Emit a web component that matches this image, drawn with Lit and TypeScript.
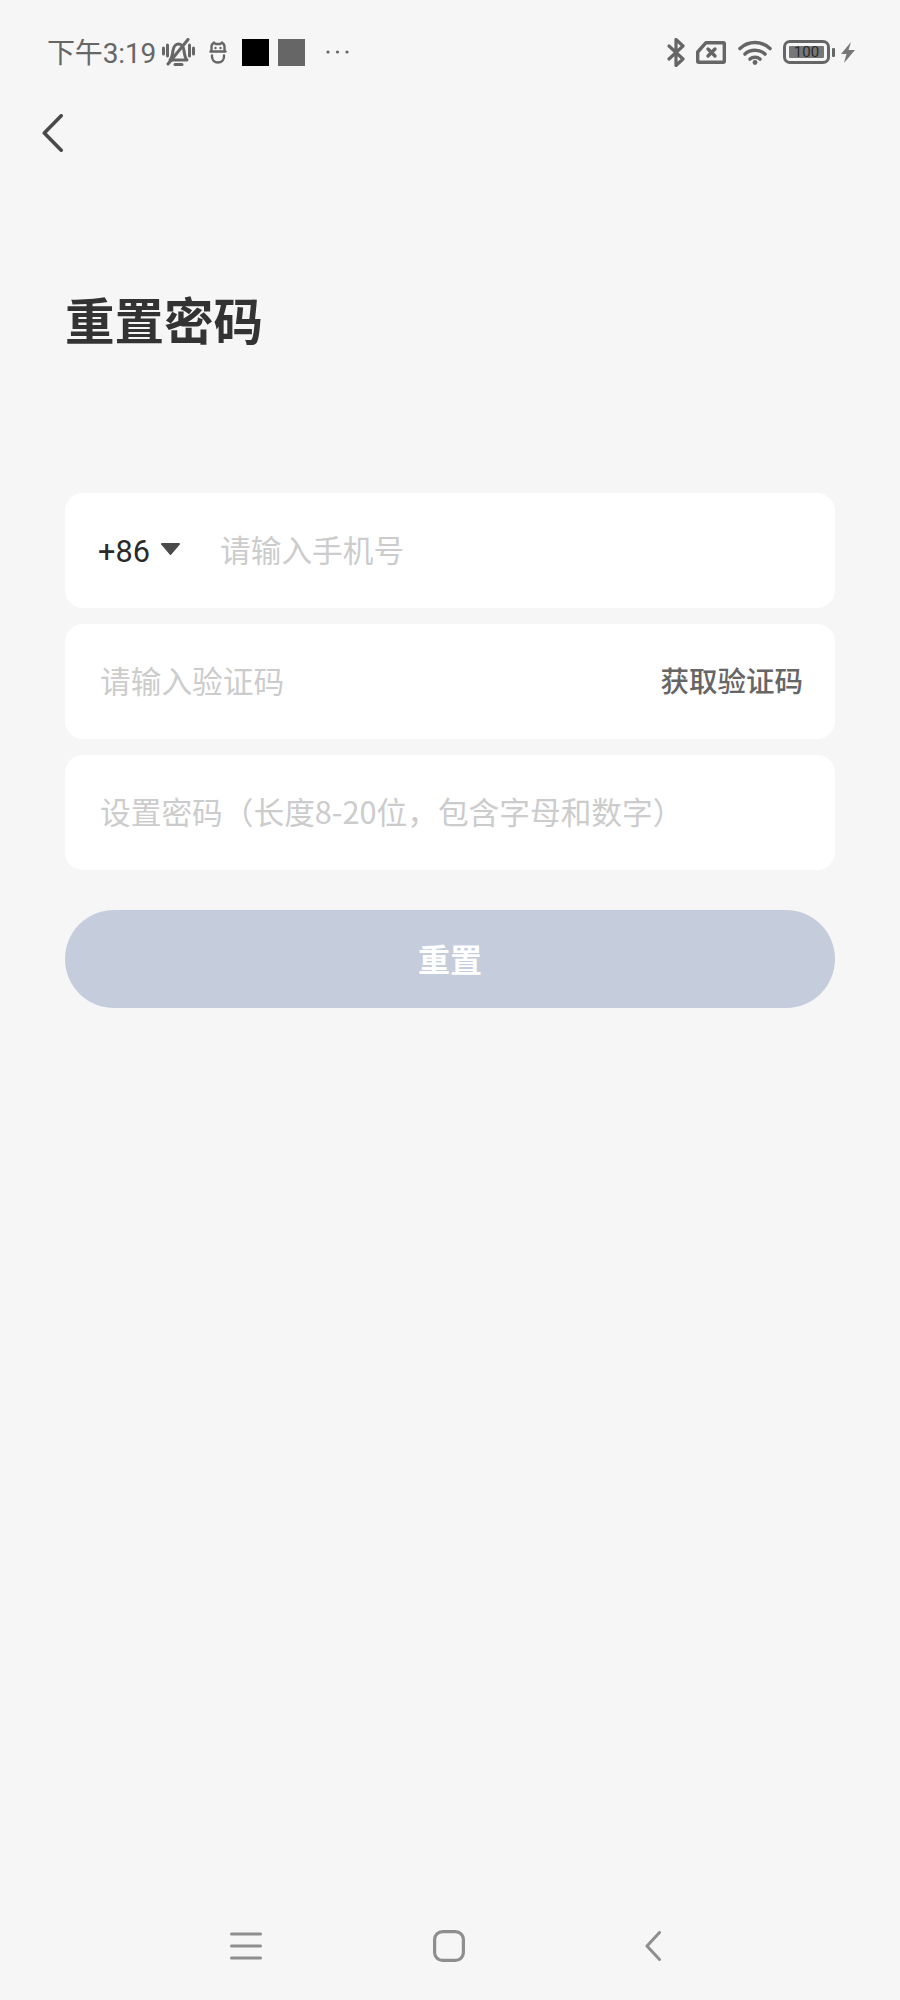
import { LitElement, css, html, svg } from "lit";
import { customElement } from "lit/decorators.js";

const FIELD_PASSWORD = "设置密码（长度8-20位，包含字母和数字）";

@customElement("app-root")
export class AppRoot extends LitElement {
  static styles = css`
    :host {
      display: flex;
      flex-direction: column;
      height: 2000px;
      background: #f6f6f6;
      font-family: Roboto, "Noto Sans CJK SC", sans-serif;
    }
    svg {
      display: block;
      flex: none;
    }

    /* status bar */
    .status {
      display: flex;
      align-items: center;
      justify-content: space-between;
      height: 52px;
      margin-top: 26px;
      padding: 0 45px 0 47px;
      color: #666;
    }
    .status-left,
    .status-right {
      display: flex;
      align-items: center;
    }
    .time {
      width: 115px;
      padding-top: 3px;
      font-size: 28px;
      line-height: 32px;
      letter-spacing: -0.15px;
      white-space: nowrap;
    }
    .bot {
      margin-left: 14px;
    }
    .sq {
      width: 27px;
      height: 27px;
      margin-left: 15px;
      background: #000;
    }
    .sq.gray {
      margin-left: 9px;
      background: #666;
    }
    .dots {
      margin-left: 21px;
    }
    .sim {
      margin-left: 11px;
    }
    .wifi {
      margin-left: 12px;
    }
    .battery {
      box-sizing: border-box;
      width: 47px;
      height: 24px;
      margin-left: 11px;
      padding: 3px;
      border: 3px solid #666;
      border-radius: 7px;
    }
    .battery-fill {
      height: 100%;
      border-radius: 1px;
      background: #777;
      color: #2b2b2b;
      font-size: 15px;
      line-height: 12px;
      text-align: center;
    }
    .nub {
      width: 3px;
      height: 9px;
      margin-left: 2px;
      border-radius: 1px;
      background: #666;
    }
    .bolt {
      margin-left: 5px;
    }

    .back {
      margin: 36px 0 0 42px;
    }
    h1 {
      margin: 137px 0 0 65px;
      font-family: "Noto Sans CJK SC", sans-serif;
      font-size: 49.500px;
      line-height: 60px;
      font-weight: 700;
      color: #333;
    }

    /* form */
    .form {
      display: flex;
      flex-direction: column;
      gap: 16px;
      margin: 144px 65px 0;
    }
    .field {
      display: flex;
      align-items: center;
      box-sizing: border-box;
      height: 115px;
      padding: 0 32px 3px 35px;
      border-radius: 18px;
      background: #fff;
      font-size: 30.700px;
    }
    .code {
      display: flex;
      align-items: center;
      width: 122px;
      margin: 5px 0 0 -2px;
      color: #2a2a2a;
    }
    .caret {
      margin-left: 11px;
      margin-top: -5px;
    }
    .hint {
      flex: 1;
      color: #ccc;
      font-family: "Noto Sans CJK SC", sans-serif;
      line-height: 40px;
    }
    .get-code {
      font-family: "Noto Sans CJK SC", sans-serif;
      font-size: 28.500px;
      line-height: 40px;
      font-weight: 500;
      color: #666;
    }
    .submit {
      display: flex;
      align-items: center;
      justify-content: center;
      box-sizing: border-box;
      height: 98px;
      margin: 40px 65px 0;
      padding-bottom: 3px;
      border-radius: 49px;
      background: #c5ccdc;
      color: #fff;
      font-family: "Noto Sans CJK SC", sans-serif;
      font-size: 32px;
      font-weight: 700;
    }

    /* navigation bar */
    .nav {
      display: flex;
      align-items: center;
      margin: auto 0 38px 230px;
    }
    .nav-home {
      margin-left: 171px;
    }
    .nav-back {
      margin-left: 180px;
    }
  `;

  private bellIcon() {
    return html`<svg width="33" height="28" viewBox="0 0 33 28" fill="none" stroke="#666" stroke-width="3" stroke-linecap="round" stroke-linejoin="round">
      <path d="M1.500 10v6M5.500 7v11M31.500 10v6M27.500 7v11" />
      <path d="M8 22c2-2 2.500-5 3-9.500.5-4 3-6.500 5.500-6.500s5 2.500 5.500 6.500c.5 4.500 1 7.500 3 9.500z" />
      <path d="M13 26.500h7" />
      <path d="M6 26 26 1.500" />
    </svg>`;
  }

  private botIcon() {
    return html`<svg class="bot" width="18" height="23" viewBox="0 0 18 23" fill="none" stroke="#666" stroke-width="2.400" stroke-linecap="round" stroke-linejoin="round">
      <path d="M2.500 10V5.500C2.500 3.500 3.500 2.500 5 1.500L6.500 3h5L13 1.500C14.500 2.500 15.500 3.500 15.500 5.500V10" />
      <path d="M1.500 10.500h15" />
      <path d="M3 14.500v1c0 3.500 2.500 6 6 6s6-2.500 6-6v-1" />
      <path d="M6.500 7h.01M11.500 7h.01" />
    </svg>`;
  }

  private dotsIcon() {
    return html`<svg class="dots" width="23" height="4" viewBox="0 0 23 4" fill="#666">
      <circle cx="2" cy="2" r="1.600" /><circle cx="11.500" cy="2" r="1.600" /><circle cx="21" cy="2" r="1.600" />
    </svg>`;
  }

  private bluetoothIcon() {
    return html`<svg width="18" height="29" viewBox="0 0 18 29" fill="none" stroke="#666" stroke-width="3.200" stroke-linejoin="round" stroke-linecap="round">
      <path d="M2 8 16 21 9 27.500V1.500L16 8 2 21" />
    </svg>`;
  }

  private simIcon() {
    return html`<svg class="sim" width="30" height="23" viewBox="0 0 30 23" fill="none" stroke="#666" stroke-width="3.400" stroke-linejoin="round" stroke-linecap="round">
      <path d="M10 1.700h17.300a1 1 0 0 1 1 1v17.600a1 1 0 0 1-1 1H2.700a1 1 0 0 1-1-1V11z" />
      <path d="M12 8l7 7M19 8l-7 7" />
    </svg>`;
  }

  private wifiIcon() {
    return html`<svg class="wifi" width="34" height="25" viewBox="0 0 34 25" fill="none" stroke="#666" stroke-width="3.600" stroke-linecap="round">
      <path d="M2 8.500c8.500-8 21.500-8 30 0" />
      <path d="M7 14c5.500-5 14.500-5 20 0" />
      <path d="M12 19c2.800-2.400 7.200-2.400 10 0" />
      <circle cx="17" cy="22.500" r="2.400" fill="#666" stroke="none" />
    </svg>`;
  }

  private boltIcon() {
    return html`<svg class="bolt" width="15" height="21" viewBox="0 0 15 21" fill="#777">
      <path d="M11 0 1 12h5.500L4 21 15 8H8.500z" />
    </svg>`;
  }

  private chevron(w: number, h: number, sw: number, color: string, cls = "") {
    return html`<svg class=${cls} width=${w} height=${h} viewBox="0 0 ${w} ${h}" fill="none" stroke=${color} stroke-width=${sw} stroke-linecap="round" stroke-linejoin="round">
      ${svg`<path d="M${w - sw / 2} ${sw / 2} ${sw / 2 + 0.5} ${h / 2} ${w - sw / 2} ${h - sw / 2}" />`}
    </svg>`;
  }

  render() {
    return html`
      <div class="status">
        <div class="status-left">
          <span class="time">下午3:19</span>
          ${this.bellIcon()} ${this.botIcon()}
          <div class="sq"></div>
          <div class="sq gray"></div>
          ${this.dotsIcon()}
        </div>
        <div class="status-right">
          ${this.bluetoothIcon()} ${this.simIcon()} ${this.wifiIcon()}
          <div class="battery"><div class="battery-fill">100</div></div>
          <div class="nub"></div>
          ${this.boltIcon()}
        </div>
      </div>

      ${this.chevron(21, 38, 3.6, "#4a4a4a", "back")}

      <h1>重置密码</h1>

      <div class="form">
        <div class="field">
          <div class="code">
            <span>+86</span>
            <svg class="caret" width="19" height="12" viewBox="0 0 19 12" fill="#4a4a4a">
              <path d="M1 0h17a1 1 0 0 1 .8 1.600L10.300 11.500a1 1 0 0 1-1.600 0L.2 1.600A1 1 0 0 1 1 0z" />
            </svg>
          </div>
          <span class="hint">请输入手机号</span>
        </div>
        <div class="field">
          <span class="hint">请输入验证码</span>
          <span class="get-code">获取验证码</span>
        </div>
        <div class="field">
          <span class="hint">${FIELD_PASSWORD}</span>
        </div>
      </div>

      <div class="submit">重置</div>

      <div class="nav">
        <svg width="32" height="28" viewBox="0 0 32 28" fill="none" stroke="#8e8e8e" stroke-width="3" stroke-linecap="round">
          <path d="M1.500 2h29M1.500 14h29M1.500 26h29" />
        </svg>
        <svg class="nav-home" width="32" height="32" viewBox="0 0 32 32" fill="none" stroke="#8e8e8e" stroke-width="3.200">
          <rect x="1.600" y="1.600" width="28.800" height="28.800" rx="8" />
        </svg>
        ${this.chevron(16, 30, 3, "#8e8e8e", "nav-back")}
      </div>
    `;
  }
}
